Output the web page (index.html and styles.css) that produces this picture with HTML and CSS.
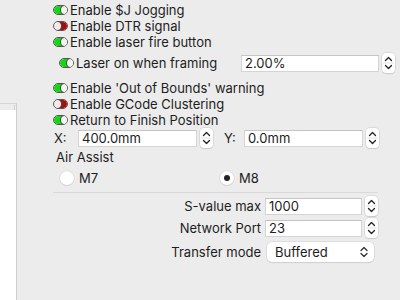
FILE: index.html
```html
<!DOCTYPE html>
<html lang="en">
<head>
    <meta charset="UTF-8">
    <title>Device Settings</title>
    <link rel="stylesheet" href="styles.css">
</head>
<body>
    <div class="window">
        <div class="sidebar">
            <div class="sidebar-head"><span class="col-sep"></span></div>
        </div>
        <div class="prefs">
            <div class="check"><span class="toggle on"></span>Enable $J Jogging</div>
            <div class="check"><span class="toggle off"></span>Enable DTR signal</div>
            <div class="check"><span class="toggle on"></span>Enable laser fire button</div>

            <div class="row framing">
                <span class="check sub"><span class="toggle on"></span>Laser on when framing</span>
                <span class="field wide"><input type="text" value="2.00%"><span class="stepper"></span></span>
            </div>

            <div class="check gap"><span class="toggle on"></span>Enable 'Out of Bounds' warning</div>
            <div class="check"><span class="toggle off"></span>Enable GCode Clustering</div>
            <div class="check"><span class="toggle on"></span>Return to Finish Position</div>

            <div class="row coords">
                <span class="coord-label">X:</span>
                <span class="field"><input type="text" value="400.0mm"><span class="stepper"></span></span>
                <span class="coord-label y">Y:</span>
                <span class="field"><input type="text" value="0.0mm"><span class="stepper"></span></span>
            </div>

            <div class="group-title">Air Assist</div>
            <div class="radios">
                <label class="radio"><span class="dot"></span>M7</label>
                <label class="radio"><span class="dot checked"></span>M8</label>
            </div>
            <hr class="sep">

            <!-- numeric settings -->
            <div class="form-row">
                <span class="form-label">S-value max</span>
                <span class="field"><input type="text" value="1000"><span class="stepper"></span></span>
            </div>
            <div class="form-row">
                <span class="form-label">Network Port</span>
                <span class="field"><input type="text" value="23"><span class="stepper"></span></span>
            </div>
            <div class="form-row popup-row">
                <span class="form-label">Transfer mode</span>
                <span class="popup">Buffered<span class="updown"></span></span>
            </div>
        </div>
    </div>
</body>
</html>
```

FILE: styles.css
```css
body {
    margin: 0;
    background-color: #ececec;
    font-family: 'Inter', 'Liberation Sans', Arial, sans-serif;
    font-size: 13px;
    color: #1d1d1d;
}
.window {
    display: flex;
    height: 300px;
    overflow: hidden;
}
.sidebar {
    width: 16px;
    margin-top: 103px;
    background: #fff;
    border-top: 1px solid #d6d6d6;
    border-right: 1px solid #cdcdcd;
}
.sidebar-head {
    height: 6px;
    background: #ececec;
    position: relative;
}
.col-sep {
    position: absolute;
    right: 1px;
    top: 1px;
    width: 1px;
    height: 5px;
    background: #d0d0d0;
}
.prefs {
    flex: 1;
    padding: 2px 0 0 36px;
}
.check {
    display: flex;
    align-items: center;
    height: 16px;
    white-space: nowrap;
}
.check.sub {
    padding-left: 6px;
}
.check.gap {
    margin-top: 7px;
}
/* little two-state toggle icon */
.toggle {
    position: relative;
    width: 15px;
    height: 10px;
    margin-right: 2px;
    border-radius: 5px;
    border: 1px solid #555;
    box-sizing: border-box;
    background: #eef5ee;
    overflow: hidden;
}
.toggle::before,
.toggle::after {
    content: '';
    position: absolute;
    top: 0;
    bottom: 0;
}
.toggle.on::before {
    left: 0;
    width: 8px;
    background: #14d614;
    border-radius: 4px 0 0 4px;
}
.toggle.on::after {
    left: 6px;
    width: 7px;
    border: 1px solid #444;
    border-radius: 50%;
    top: -1px;
    bottom: -1px;
    background: #eef6ee;
}
.toggle.off {
    background: #f4e6e6;
}
.toggle.off::before {
    right: 0;
    width: 8px;
    background: #a80b0b;
    border-radius: 0 4px 4px 0;
}
.toggle.off::after {
    left: -1px;
    width: 7px;
    border: 1px solid #444;
    border-radius: 50%;
    top: -1px;
    bottom: -1px;
    background: #f5e9e9;
}
.row {
    display: flex;
    align-items: center;
}
.framing {
    margin-top: 3px;
    height: 20px;
    justify-content: space-between;
    width: 342px;
}
.field {
    display: flex;
    align-items: center;
}
input[type="text"] {
    font: inherit;
    color: #1d1d1d;
    width: 119px;
    height: 17px;
    box-sizing: border-box;
    padding: 0 3px;
    border: 1px solid #d4d4d4;
    border-top-color: #c4c4c4;
    background: #fff;
    outline: none;
}
.field.wide input {
    width: 138px;
}
.stepper {
    width: 13px;
    height: 20px;
    margin-left: 3px;
    border-radius: 4px;
    background-color: #fff;
    box-shadow: 0 0 0 0.5px #c8c8c8, 0 1px 1px rgba(0, 0, 0, 0.12);
    background-image: url("data:image/svg+xml,%3Csvg xmlns='http://www.w3.org/2000/svg' width='13' height='20'%3E%3Cpath d='M3.5 7.5 6.5 4.5 9.5 7.5M3.5 12.5 6.5 15.5 9.5 12.5' fill='none' stroke='%23222' stroke-width='1.3' stroke-linecap='round' stroke-linejoin='round'/%3E%3Cpath d='M1 10h11' stroke='%23e4e4e4'/%3E%3C/svg%3E");
}
.coords {
    margin-top: 1px;
    height: 18px;
}
.coord-label {
    width: 24px;
    padding-left: 1px;
}
.coord-label.y {
    width: 20px;
    padding-left: 11px;
}
.group-title {
    margin-top: 2px;
    padding-left: 3px;
    height: 16px;
    line-height: 16px;
}
.radios {
    display: flex;
    margin-top: 5px;
    height: 16px;
    align-items: center;
}
.radio {
    display: flex;
    align-items: center;
    width: 153px;
    padding-left: 7px;
}
.dot {
    width: 14px;
    height: 14px;
    margin-right: 5px;
    border-radius: 50%;
    background: #fff;
    box-shadow: 0 0 0 0.5px #d0d0d0, 0 1px 1px rgba(0, 0, 0, 0.1);
    position: relative;
}
.dot.checked::after {
    content: '';
    position: absolute;
    left: 4px;
    top: 4px;
    width: 6px;
    height: 6px;
    border-radius: 50%;
    background: #222;
}
.sep {
    margin: 6px 0 0 0;
    width: 325px;
    border: none;
    border-top: 1px solid #d9d9d9;
    height: 0;
}
.form-row {
    display: flex;
    align-items: center;
    height: 20px;
    margin-top: 3px;
}
.form-row + .form-row {
    margin-top: 2px;
}
.form-label {
    width: 208px;
    text-align: right;
    padding-right: 4px;
}
.form-row .field input {
    width: 97px;
}
.popup-row {
    height: 22px;
    margin-top: 3px !important;
}
.popup {
    position: relative;
    width: 107px;
    height: 20px;
    line-height: 20px;
    margin-left: 2px;
    box-sizing: border-box;
    padding-left: 8px;
    border-radius: 5px;
    background: #fff;
    box-shadow: 0 0 0 0.5px #cfcfcf, 0 1px 1px rgba(0, 0, 0, 0.12);
}
.updown {
    position: absolute;
    right: 6px;
    top: 4px;
    width: 8px;
    height: 12px;
    background-image: url("data:image/svg+xml,%3Csvg xmlns='http://www.w3.org/2000/svg' width='8' height='12'%3E%3Cpath d='M1 4.5 4 1.5 7 4.5M1 7.5 4 10.5 7 7.5' fill='none' stroke='%23333' stroke-width='1.3' stroke-linecap='round' stroke-linejoin='round'/%3E%3C/svg%3E");
}
```
